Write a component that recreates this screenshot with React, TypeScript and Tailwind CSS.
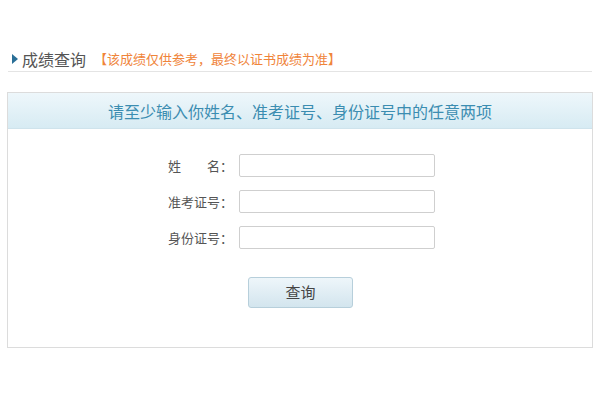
export default function App() {
  const fields = [
    { label: '姓\u3000\u3000名：', name: 'name' },
    { label: '准考证号：', name: 'ticket' },
    { label: '身份证号：', name: 'idcard' },
  ];

  return (
    <div className="w-[600px] h-[400px] bg-white font-['Microsoft_YaHei','Noto_Sans_CJK_SC',sans-serif] pt-[48px] px-[7px]">
      <div className="flex items-center h-[24px] border-b border-[#e4e4e4] pb-[2px] mx-[1px]">
        <span className="ml-[4px] w-0 h-0 border-y-[5px] border-y-transparent border-l-[6px] border-l-[#2a6f97]" />
        <span className="ml-[4px] text-[16px] text-[#555]">成绩查询</span>
        <span className="ml-[8px] text-[13px] text-[#f0843a]">【该成绩仅供参考，最终以证书成绩为准】</span>
      </div>

      <div className="mt-[20px] border border-[#dcdcdc] h-[256px] flex flex-col">
        <div className="h-[36px] flex items-center justify-center bg-gradient-to-b from-[#eef7fb] to-[#d7ebf3] border-b border-[#cfe3ec] text-[16px] text-[#3b8db1]">
          请至少输入你姓名、准考证号、身份证号中的任意两项
        </div>
        <div className="flex flex-col pt-[25px]">
          <div className="flex flex-col gap-[13px] pl-[146px]">
            {fields.map((f) => (
              <div key={f.name} className="flex items-center">
                <label className="w-[85px] text-right pr-[6px] text-[13px] text-[#555]">{f.label}</label>
                <input className="w-[196px] h-[23px] border border-[#cfcfcf] rounded-[2px] bg-white outline-none" />
              </div>
            ))}
          </div>
          <button className="mt-[28px] ml-[240px] w-[105px] h-[31px] rounded-[3px] border border-[#b7cfdb] bg-gradient-to-b from-[#eef6fa] to-[#d3e5ee] text-[15px] text-[#444]">
            查询
          </button>
        </div>
      </div>
    </div>
  );
}
